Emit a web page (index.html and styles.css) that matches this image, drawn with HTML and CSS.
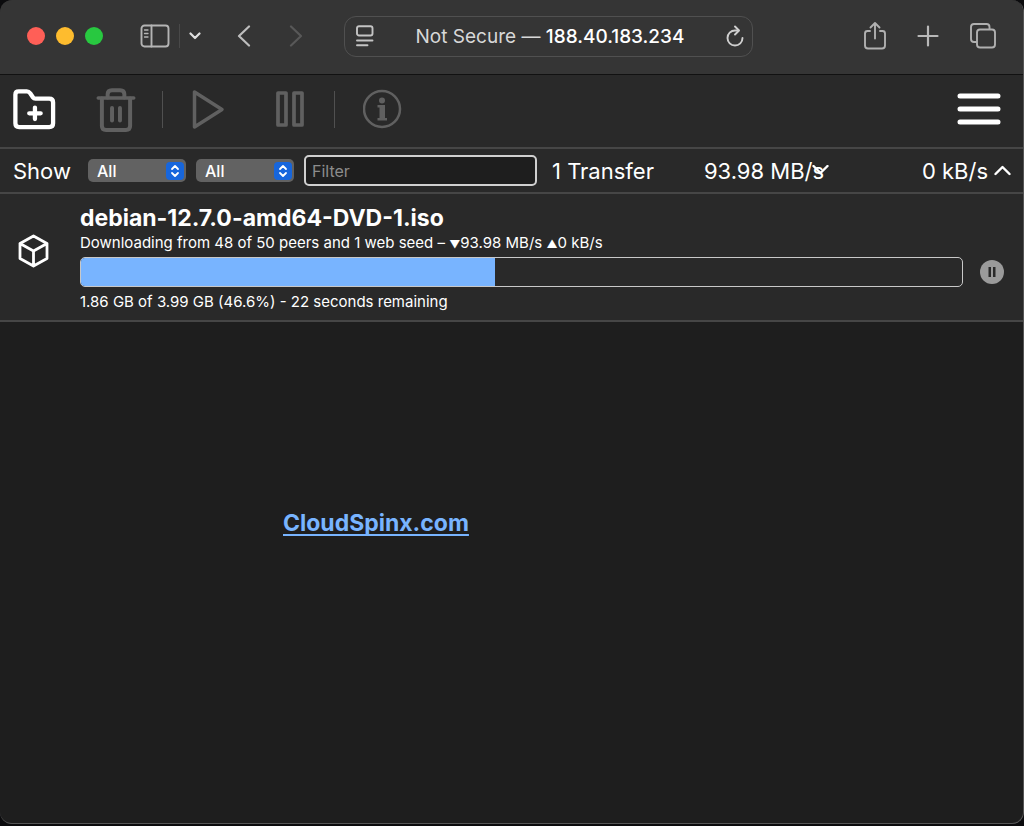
FILE: index.html
```html
<!DOCTYPE html>
<html lang="en">
<head>
<meta charset="UTF-8">
<meta name="viewport" content="width=device-width, initial-scale=1.0">
<title>Transmission Web Interface</title>
<link rel="stylesheet" href="styles.css">
</head>
<body>
<div class="window">
    <header class="titlebar">
        <div class="lights">
            <button class="light close" aria-label="Close"></button>
            <button class="light minimize" aria-label="Minimize"></button>
            <button class="light zoom" aria-label="Zoom"></button>
        </div>
        <div class="sidebar-group">
            <button aria-label="Sidebar">
                <svg width="30" height="24" viewBox="0 0 30 24" fill="none" stroke="#b4b4b4" stroke-width="1.9" stroke-linecap="round"><rect x="1.500" y="1.500" width="27" height="21" rx="3"/><path d="M11.500 1.500v21"/><path d="M4.500 6h3.500M4.500 9.500h3.500M4.500 13h3.500" stroke-width="1.300"/></svg>
            </button>
            <span class="sidebar-divider"></span>
            <button aria-label="Tab groups">
                <svg width="12" height="8" viewBox="0 0 12 8" fill="none" stroke="#e0e0e0" stroke-width="2.200" stroke-linecap="round" stroke-linejoin="round"><path d="M1.500 1.500L6 6l4.500-4.500"/></svg>
            </button>
        </div>
        <div class="history">
            <button aria-label="Back">
                <svg width="14" height="22" viewBox="0 0 14 22" fill="none" stroke="#bdbdbd" stroke-width="2.200" stroke-linecap="round" stroke-linejoin="round"><path d="M12 1.500L2 11l10 9.500"/></svg>
            </button>
            <button aria-label="Forward" disabled>
                <svg width="14" height="22" viewBox="0 0 14 22" fill="none" stroke="#585858" stroke-width="2.200" stroke-linecap="round" stroke-linejoin="round"><path d="M2 1.500L12 11L2 20.500"/></svg>
            </button>
        </div>
        <div class="address-bar">
            <button aria-label="Page menu">
                <svg width="18" height="22" viewBox="0 0 18 22" fill="none" stroke="#c4c4c4" stroke-width="1.900" stroke-linecap="round"><rect x="1" y="1.200" width="15.500" height="9.300" rx="2"/><path d="M1 15.500h15.500M1 20.300h10.500"/></svg>
            </button>
            <button class="address">Not Secure — <span>188.40.183.234</span></button>
            <button aria-label="Reload">
                <svg width="18" height="22" viewBox="0 0 18 22" fill="none" stroke="#cfcfcf" stroke-width="1.900" stroke-linecap="round" stroke-linejoin="round"><path d="M12.500 5.500H9a7.500 7.500 0 1 0 7.500 7.500"/><path d="M9 1.500l4 4-4 4"/></svg>
            </button>
        </div>
        <div class="page-actions">
            <button aria-label="Share">
                <svg width="24" height="30" viewBox="0 0 24 30" fill="none" stroke="#b0b0b0" stroke-width="1.900" stroke-linecap="round" stroke-linejoin="round"><path d="M7 10H4.500Q2 10 2 12.500v12q0 3 3 3h14q3 0 3-3V12.500Q22 10 19.500 10H17"/><path d="M12 17.500V2.500M7.500 6.500L12 2l4.500 4.500"/></svg>
            </button>
            <button aria-label="New tab">
                <svg width="22" height="22" viewBox="0 0 22 22" fill="none" stroke="#b8b8b8" stroke-width="2.200" stroke-linecap="round"><path d="M11 1.500v19M1.500 11h19"/></svg>
            </button>
            <button aria-label="Tab overview">
                <svg width="28" height="28" viewBox="0 0 28 28" fill="none" stroke="#b0b0b0" stroke-width="1.900" stroke-linejoin="round"><rect x="8" y="7.500" width="18" height="18" rx="3"/><path d="M8 20H5q-3 0-3-3V5q0-3 3-3h12.500q3 0 3 3v2.500"/></svg>
            </button>
        </div>
    </header>

    <nav class="toolbar">
        <button aria-label="Open torrent">
            <svg width="44" height="42" viewBox="0 0 46 44" fill="none" stroke="#fff" stroke-width="4.500" stroke-linecap="round" stroke-linejoin="round"><path d="M3.500 37V7q0-3.500 3.500-3.500h8.500q2 0 3.500 2l3 4.500q.8 1.200 2.500 1.200H39q4 0 4 4V37q0 4-4 4H7.500q-4 0-4-4z"/><path d="M24 20.500v12M18 26.500h12"/></svg>
        </button>
        <button aria-label="Remove" disabled>
            <svg width="42" height="46" viewBox="0 0 40 44" fill="none" stroke="#606060" stroke-width="3.800" stroke-linecap="round" stroke-linejoin="round"><path d="M3 11.500h34" stroke-width="3.300"/><path d="M6.500 12v26q0 4 4 4h19q4 0 4-4V12"/><path d="M12 11V8q0-4 4-4h8q4 0 4 4v3"/><path d="M16.200 21v12M23.800 21v12"/></svg>
        </button>
        <span class="toolbar-divider"></span>
        <button aria-label="Start" disabled>
            <svg width="45" height="42" viewBox="0 0 45 42" fill="none" stroke="#606060" stroke-width="3.500" stroke-linejoin="round"><path d="M3.500 4v35L31 21.500z"/></svg>
        </button>
        <button aria-label="Pause" disabled>
            <svg width="34" height="36" viewBox="0 0 34 36" fill="none" stroke="#606060" stroke-width="3.700" stroke-linejoin="round"><path d="M3 2h8v32H3zM19 2h8v32h-8z"/></svg>
        </button>
        <span class="toolbar-divider"></span>
        <button aria-label="Inspector" disabled>
            <svg width="40" height="40" viewBox="0 0 40 40"><circle cx="19" cy="20" r="18" fill="none" stroke="#606060" stroke-width="2.500"/><circle cx="19" cy="11.500" r="3" fill="#606060"/><path d="M14.500 16H22v13h2v2.500H14.500V29h2V18.500h-2z" fill="#606060"/></svg>
        </button>
        <button class="menu-button" aria-label="More">
            <svg width="46" height="36" viewBox="0 0 46 36" fill="none" stroke="#fff" stroke-width="5" stroke-linecap="round"><path d="M5 5h38M5 18h38M5 31h38"/></svg>
        </button>
    </nav>

    <section class="filter-bar">
        <label class="show" for="filterMode">Show</label>
        <div class="select">
            <select id="filterMode"><option>All</option></select>
            <svg width="18" height="18" viewBox="0 0 18 18" fill="none" stroke="#fff" stroke-width="1.800" stroke-linecap="round" stroke-linejoin="round"><rect width="18" height="18" rx="4" fill="#1766dc" stroke="none"/><path d="M6 7l3-3 3 3M6 11l3 3 3-3"/></svg>
        </div>
        <div class="select">
            <select id="filterTracker" aria-label="Tracker"><option>All</option></select>
            <svg width="18" height="18" viewBox="0 0 18 18" fill="none" stroke="#fff" stroke-width="1.800" stroke-linecap="round" stroke-linejoin="round"><rect width="18" height="18" rx="4" fill="#1766dc" stroke="none"/><path d="M6 7l3-3 3 3M6 11l3 3 3-3"/></svg>
        </div>
        <input class="filter-input" type="search" placeholder="Filter" aria-label="Filter">
        <span class="count">1 Transfer</span>
        <div class="speed down">
            <span>93.98 MB/s</span>
            <svg width="18" height="12" viewBox="0 0 18 12" fill="none" stroke="#fff" stroke-width="2.400" stroke-linecap="round" stroke-linejoin="round"><path d="M1.500 1l7 7 7-7"/></svg>
        </div>
        <div class="speed up">
            <span>0 kB/s</span>
            <svg width="18" height="12" viewBox="0 0 18 12" fill="none" stroke="#fff" stroke-width="2.400" stroke-linecap="round" stroke-linejoin="round"><path d="M1.500 9l7-7 7 7"/></svg>
        </div>
    </section>

    <main class="content">
        <article class="torrent">
            <svg class="torrent-icon" width="34" height="36" viewBox="0 0 34 36" fill="none" stroke="#fff" stroke-width="2.800" stroke-linejoin="round" stroke-linecap="round"><path d="M17.500 3L31 10.500v15L17.500 33 4 25.500v-15zM4 10.500L17.500 18 31 10.500M17.500 18v15"/></svg>
            <div class="torrent-info">
                <h1 class="torrent-name">debian-12.7.0-amd64-DVD-1.iso</h1>
                <p class="torrent-peers">Downloading from 48 of 50 peers and 1 web seed – <span class="arrow">▼</span>93.98 MB/s <span class="arrow">▲</span>0 kB/s</p>
                <div class="torrent-bar">
                    <div class="progress" role="progressbar" aria-label="Download progress" aria-valuenow="47">
                        <div class="progress-fill" style="width: 47%"></div>
                    </div>
                    <button class="torrent-pause" aria-label="Pause torrent">
                        <svg width="26" height="26" viewBox="0 0 26 26"><circle cx="13" cy="13" r="12" fill="#9a9a9a"/><path d="M9.500 8H12v10H9.500zM14 8h2.500v10H14z" fill="#292929"/></svg>
                    </button>
                </div>
                <p class="torrent-details">1.86 GB of 3.99 GB (46.6%) - 22 seconds remaining</p>
            </div>
        </article>
        <a class="site-link" href="#">CloudSpinx.com</a>
    </main>
</div>
</body>
</html>
```
FILE: styles.css
```css
* {
    box-sizing: border-box;
}
body {
    margin: 0;
    min-height: 100vh;
    display: flex;
    padding-bottom: 2px;
    background-color: #0b0b0d;
    color: #fff;
    font-family: Inter, "Liberation Sans", sans-serif;
}
button {
    display: flex;
    flex-shrink: 0;
    padding: 0;
    border: none;
    background: none;
    color: inherit;
    font: inherit;
}
svg {
    display: block;
    flex-shrink: 0;
}
.window {
    flex: 1;
    display: flex;
    flex-direction: column;
    min-width: 0;
    overflow: hidden;
    border-right: 1px solid #555;
    border-bottom: 1px solid #555;
    border-radius: 12px;
    background-color: #1e1e1e;
}

/* browser chrome */
.titlebar {
    display: flex;
    align-items: center;
    height: 75px;
    padding: 0 26px 2px 27px;
    border-bottom: 1px solid #111;
    background-color: #353535;
}
.lights {
    display: flex;
    gap: 11px;
}
.light {
    width: 18px;
    height: 18px;
    border-radius: 50%;
}
.close {
    background-color: #ff5f57;
}
.minimize {
    background-color: #febc2e;
}
.zoom {
    background-color: #28c840;
}
.sidebar-group {
    display: flex;
    align-items: center;
    gap: 9px;
    margin-left: 37px;
}
.sidebar-divider {
    width: 1px;
    height: 24px;
    background-color: #494949;
}
.history {
    display: flex;
    gap: 38px;
    margin: 0 41px 0 36px;
}
.address-bar {
    flex: 1;
    display: flex;
    align-items: center;
    justify-content: space-between;
    max-width: 409px;
    height: 41px;
    padding: 0 8px 0 11px;
    border: 1px solid #505050;
    border-radius: 12px;
}
.address {
    color: #d8d8d8;
    font-size: 19px;
    white-space: pre;
}
.address span {
    color: #fff;
    font-weight: 500;
}
.page-actions {
    display: flex;
    align-items: center;
    gap: 30px;
    margin-left: auto;
}

/* main toolbar */
.toolbar {
    display: flex;
    align-items: center;
    height: 74px;
    padding: 0 22px 4px 12px;
    border-bottom: 2px solid #464646;
    background-color: #292929;
}
.toolbar button + button {
    margin-left: 39px;
}
.toolbar-divider {
    width: 1px;
    height: 37px;
    margin: 0 28px 0 25px;
    background-color: #505050;
}
.toolbar button + button.menu-button {
    margin-left: auto;
}

/* filters and speeds */
.filter-bar {
    display: flex;
    align-items: center;
    height: 45px;
    padding: 0 11px 0 13px;
    border-bottom: 2px solid #464646;
    background-color: #292929;
    font-size: 22px;
}
.show {
    width: 75px;
}
.select {
    display: grid;
    align-items: center;
    width: 98px;
    margin-right: 10px;
}
.select select,
.select svg {
    grid-area: 1 / 1;
}
.select select {
    appearance: none;
    width: 100%;
    height: 23px;
    padding: 0 9px;
    border: none;
    border-radius: 5px;
    background-color: #626262;
    color: #fff;
    font: 500 16px Inter, sans-serif;
}
.select svg {
    justify-self: end;
    margin-right: 2px;
    pointer-events: none;
}
.filter-input {
    flex: 1;
    min-width: 0;
    max-width: 233px;
    height: 31px;
    padding: 0 6px;
    border: 2px solid #d0d0d0;
    border-radius: 5px;
    background-color: #1e1e1e;
    color: #fff;
    font: 16px Inter, sans-serif;
}
.filter-input::placeholder {
    color: #8c8c8c;
}
.count {
    margin-left: 15px;
}
.speed {
    display: flex;
    align-items: center;
    white-space: nowrap;
}
.down {
    width: 126px;
    margin-left: auto;
}
.down span {
    width: 108px;
}
.up {
    gap: 6px;
    margin-left: 92px;
}

/* torrent list */
.content {
    flex: 1;
}
.torrent {
    display: flex;
    align-items: flex-start;
    gap: 30px;
    padding: 9px 18px 8px 16px;
    border-bottom: 2px solid #464646;
    background-color: #292929;
}
.torrent-icon {
    margin-top: 30px;
}
.torrent-info {
    flex: 1;
}
.torrent-name {
    margin: 0;
    font-size: 23px;
    line-height: 30px;
}
.torrent-peers,
.torrent-details {
    margin: 0;
    font-size: 15px;
    line-height: 20px;
}
.torrent-details {
    margin-top: 5px;
}
.arrow {
    font-size: 11px;
}
.torrent-bar {
    display: flex;
    align-items: center;
    gap: 16px;
    margin-top: 3px;
}
.progress {
    flex: 1;
    height: 30px;
    overflow: hidden;
    border: 1px solid #c8c8c8;
    border-radius: 5px;
}
.progress-fill {
    height: 100%;
    background-color: #78b4ff;
}
.site-link {
    display: block;
    width: fit-content;
    margin: 186px 0 0 283px;
    color: #78b4ff;
    font-size: 23px;
    font-weight: 700;
    line-height: 30px;
    text-decoration-thickness: 2px;
    text-underline-offset: 3px;
    text-decoration-skip-ink: none;
}
```
